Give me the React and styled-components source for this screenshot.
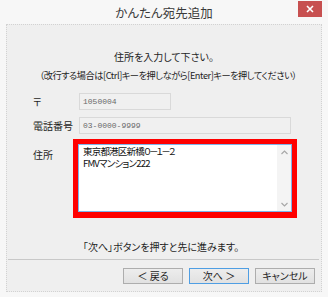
import React from 'react'
import styled, { createGlobalStyle } from 'styled-components'

const GlobalStyle = createGlobalStyle`
  html, body { margin: 0; padding: 0; }
  body {
    background: #f6f6f6;
    font-family: "Noto Sans CJK JP", "Noto Sans", sans-serif;
    font-feature-settings: "palt";
    color: #1e1e1e;
  }
`

const Window = styled.div`
  width: 328px;
  height: 297px;
  box-sizing: border-box;
  background: #f7f7f7;
  display: flex;
  flex-direction: column;
  position: relative;
  overflow: hidden;
`

const TitleBar = styled.div`
  height: 24px;
  display: flex;
  align-items: center;
  justify-content: center;
  font-size: 12.5px;
  color: #3a3a3a;
  padding-top: 1px;
  box-sizing: border-box;
`

const CloseButton = styled.div`
  position: absolute;
  top: 1px;
  right: 6px;
  width: 24px;
  height: 16px;
  background: #c75050;
  display: flex;
  align-items: center;
  justify-content: center;
`

const Panel = styled.div`
  margin: 0 6px;
  height: 268px;
  box-sizing: border-box;
  background: #efefef;
  border: 1px dotted #d2d2d2;
  display: flex;
  flex-direction: column;
`

const Intro = styled.div`
  margin-top: 23px;
  text-align: center;
  font-size: 10px;
  line-height: 18px;
`

const IntroHint = styled.div`
  font-size: 9.2px;
  letter-spacing: -0.45px;
  padding-left: 8px;
`

const Form = styled.div`
  margin-top: 9px;
  display: grid;
  grid-template-columns: 46px 1fr;
  row-gap: 7px;
  padding-left: 26px;
`

const Label = styled.div`
  font-size: 10px;
  line-height: 17px;
  padding-top: ${p => (p.$top ? '5px' : '0')};
`

const Field = styled.div`
  width: ${p => p.$width}px;
  height: 17px;
  box-sizing: border-box;
  border: 1px solid #d9d9d9;
  background: #f0f0f0;
  font-family: "Liberation Mono", "DejaVu Sans Mono", monospace;
  font-size: 8px;
  color: #6a6a6a;
  line-height: 15px;
  padding-left: 3px;
`

const Highlight = styled.div`
  margin-left: -6px;
  margin-top: -2px;
  width: 224px;
  height: 79px;
  box-sizing: border-box;
  border: 5px solid #ff0000;
  border-bottom-width: 6px;
`

const TextArea = styled.div`
  height: 100%;
  box-sizing: border-box;
  border: 1px solid #7eb4ea;
  background: #fff;
  display: flex;
`

const AreaText = styled.div`
  flex: 1;
  padding: 0 0 0 4px;
  font-size: 9.5px;
  line-height: 12px;
  letter-spacing: -0.8px;
  color: #111;
`

const Narrow = styled.span`
  letter-spacing: -2.2px;
`

const ScrollBar = styled.div`
  width: 14px;
  background: #f4f4f4;
  display: flex;
  flex-direction: column;
  justify-content: space-between;
  align-items: center;
  padding: 5px 0 4px;
`

const Note = styled.div`
  margin-top: 20px;
  text-align: center;
  font-size: 10px;
  line-height: 18px;
  padding-right: 6px;
`

const Separator = styled.div`
  margin: 3px 2px 0 1px;
  height: 1px;
  background: #c8c8c8;
`

const ButtonRow = styled.div`
  margin-top: 8px;
  display: flex;
  justify-content: flex-end;
  gap: 6px;
  padding-right: 6px;
`

const Button = styled.div`
  width: 60px;
  height: 16px;
  box-sizing: border-box;
  border: 1px solid ${p => (p.$default ? '#4f9ee3' : '#adadad')};
  background: linear-gradient(#ededed, #e1e1e1);
  font-size: 10px;
  line-height: 14px;
  text-align: center;
  color: #1e1e1e;
`

const Chevron = ({ up }) => (
  <svg width="7" height="5" viewBox="0 0 7 5">
    <path d={up ? 'M0.5 4 L3.5 1 L6.5 4' : 'M0.5 1 L3.5 4 L6.5 1'} fill="none" stroke="#a8a8a8" strokeWidth="1.2" />
  </svg>
)

export default function App() {
  return (
    <Window>
      <GlobalStyle />
      <TitleBar>かんたん宛先追加</TitleBar>
      <CloseButton>
        <svg width="8" height="8" viewBox="0 0 8 8">
          <path d="M1 1 L7 7 M7 1 L1 7" stroke="#fff" strokeWidth="1.6" />
        </svg>
      </CloseButton>
      <Panel>
        <Intro>
          <div>住所を入力して下さい。</div>
          <IntroHint>（改行する場合は[Ctrl]キーを押しながら[Enter]キーを押してください）</IntroHint>
        </Intro>
        <Form>
          <Label>〒</Label>
          <Field $width={92}>1050004</Field>
          <Label>電話番号</Label>
          <Field $width={212}>03-0000-9999</Field>
          <Label $top>住所</Label>
          <Highlight>
            <TextArea>
              <AreaText>
                東京都港区新橋<Narrow>０－１－２</Narrow><br />FMVマンション222
              </AreaText>
              <ScrollBar>
                <Chevron up />
                <Chevron />
              </ScrollBar>
            </TextArea>
          </Highlight>
        </Form>
        <Note>「次へ」ボタンを押すと先に進みます。</Note>
        <Separator />
        <ButtonRow>
          <Button>＜ 戻る</Button>
          <Button $default>次へ ＞</Button>
          <Button>キャンセル</Button>
        </ButtonRow>
      </Panel>
    </Window>
  )
}
